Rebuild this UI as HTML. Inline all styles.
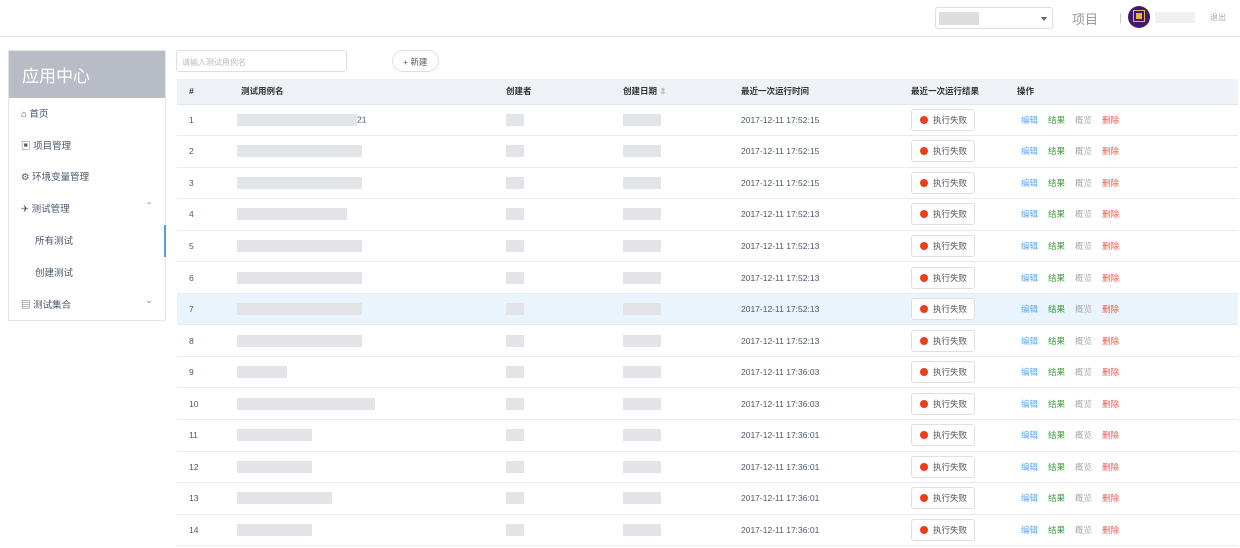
<!DOCTYPE html><html><head><meta charset="utf-8"><style>
*{margin:0;padding:0;box-sizing:border-box}
body{width:1240px;height:548px;overflow:hidden;background:#fff;font-family:"Liberation Sans","Noto Sans CJK SC",sans-serif;color:#48576a;position:relative}
.top{position:absolute;left:0;top:0;width:1240px;height:37px;border-bottom:1px solid #e4e4e4}
.abs{position:absolute}
.side{position:absolute;left:8px;top:50px;width:158px;height:271px;border:1px solid #e0e3e8;border-radius:2px;background:#fff}
.sh{height:47px;background:#b8bcc4;color:#fff;font-size:17px;padding:11px 0 0 13px}
.mi{position:absolute;left:12px;font-size:9.5px;color:#48576a}
table{border-collapse:collapse;position:absolute;left:177px;top:79px;width:1061px;font-size:8.5px;color:#48576a}
th{height:25px;background:#eef1f6;text-align:left;font-weight:bold;font-size:8.5px;color:#333;border-bottom:1px solid #e0e6ed}
td{height:31.55px;border-bottom:1px solid #e6ebf0;position:relative}
tr.hl td{background:#eaf4fc}
.b{display:inline-block;height:12px;background:#e3e4e7;vertical-align:middle}
.res{display:inline-block;border:1px solid #dcdfe6;border-radius:3px;padding:4px 7px 4px 8px;font-size:8.5px;color:#555;background:#fff}
.dot{display:inline-block;width:8px;height:8px;border-radius:50%;background:#ee3d1a;margin-right:5px;vertical-align:-1px}
.op span{margin-right:10px;font-size:8.5px}
</style></head><body>
<div class="top">
 <div class="abs" style="left:935px;top:7px;width:118px;height:22px;border:1px solid #dcdfe6;border-radius:3px"><div class="b" style="position:absolute;left:3px;top:4px;width:40px;height:13px;background:#ddd"></div><div style="position:absolute;right:5px;top:9px;border:3.5px solid transparent;border-top:4px solid #666"></div></div>
 <div class="abs" style="left:1072px;top:9px;font-size:13px;color:#999">项目</div>
 <div class="abs" style="left:1120px;top:13px;width:1px;height:10px;background:#ccc"></div>
 <div class="abs" style="left:1128px;top:6px;width:22px;height:22px;border-radius:50%;background:#3f1a6e"><div style="position:absolute;left:6px;top:5px;width:10px;height:10px;background:#e4b54a;border:2px solid #3f1a6e;outline:1px solid #e4b54a"></div></div>
 <div class="abs" style="left:1155px;top:12px;width:40px;height:11px;background:#f0f0f0"></div>
 <div class="abs" style="left:1210px;top:12px;font-size:8px;color:#aaa">退出</div>
</div>
<div class="side"><div class="sh">应用中心</div>
 <div class="mi" style="top:55px">⌂ 首页</div>
 <div class="mi" style="top:87px">▣ 项目管理</div>
 <div class="mi" style="top:118px">⚙ 环境变量管理</div>
 <div class="mi" style="top:150px">✈ 测试管理</div><div class="mi" style="left:136px;top:150px;color:#999">⌃</div>
 <div class="mi" style="left:26px;top:182px">所有测试</div>
 <div class="abs" style="left:155px;top:174px;width:2px;height:32px;background:#4a9ff5"></div>
 <div class="mi" style="left:26px;top:214px">创建测试</div>
 <div class="mi" style="top:246px">▤ 测试集合</div><div class="mi" style="left:136px;top:244px;color:#999">⌄</div>
</div>
<div class="abs" style="left:176px;top:50px;width:171px;height:22px;border:1px solid #dcdfe6;border-radius:3px;font-size:8px;color:#bbb;padding:6px 5px">请输入测试用例名</div>
<div class="abs" style="left:392px;top:50px;width:47px;height:22px;border:1px solid #dcdfe6;border-radius:11px;font-size:8.5px;color:#555;padding:5px 0 0 10px">+ 新建</div>
<table>
<tr><th style="width:64px;padding-left:12px">#</th><th style="width:265px">测试用例名</th><th style="width:117px">创建者</th><th style="width:118px">创建日期 <span style="color:#bbb">⇕</span></th><th style="width:170px">最近一次运行时间</th><th style="width:106px">最近一次运行结果</th><th>操作</th></tr>
<tbody id="tb"></tbody>
</table>
<script>
var t=["17:52:15","17:52:15","17:52:15","17:52:13","17:52:13","17:52:13","17:52:13","17:52:13","17:36:03","17:36:03","17:36:01","17:36:01","17:36:01","17:36:01"];
var w=[120,125,125,110,125,125,125,125,50,138,75,75,95,75];var h="";
for(var i=0;i<14;i++){h+='<tr'+(i==6?' class="hl"':'')+'><td style="padding-left:12px">'+(i+1)+'</td><td><span class="b" style="margin-left:-4px;width:'+w[i]+'px"></span>'+(i==0?'21':'')+'</td><td><span class="b" style="width:18px"></span></td><td><span class="b" style="width:38px"></span></td><td>2017-12-11 '+t[i]+'</td><td><span class="res"><span class="dot"></span>执行失败</span></td><td class="op" style="padding-left:4px"><span style="color:#5aa7f0">编辑</span><span style="color:#3a9a3a">结果</span><span style="color:#aaa">概览</span><span style="color:#f05a4a">删除</span></td></tr>'}
document.getElementById("tb").innerHTML=h;
</script>
</body></html>
